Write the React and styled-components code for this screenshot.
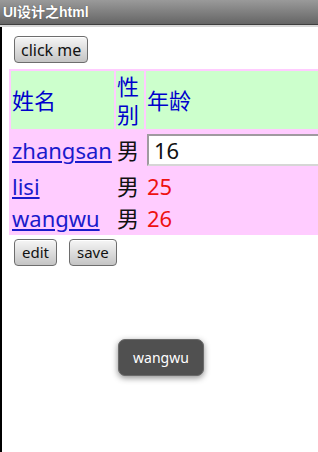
import styled, { createGlobalStyle } from "styled-components"

const Global = createGlobalStyle`
    html, body {
        margin: 0;
        padding: 0;
        background: #fff;
        overflow: hidden;
    }
    body {
        font-family: "Noto Sans", "Noto Sans CJK SC", sans-serif;
    }
`

const Screen = styled.div`
    position: relative;
    width: 318px;
    height: 452px;
    overflow: hidden;
    display: flex;
    flex-direction: column;
`

const TitleBar = styled.div`
    height: 24px;
    flex: none;
    background: linear-gradient(#9a9a9a, #656565);
    border-bottom: 1px solid #3e3e3e;
    color: #fff;
    font-family: "Liberation Sans", "Noto Sans CJK SC", sans-serif;
    font-weight: 700;
    font-size: 14px;
    line-height: 24px;
    padding-left: 3px;
    text-shadow: 0 0 1px #444;
`

const TitleShade = styled.div`
    height: 2px;
    flex: none;
    background: #d6d6d6;
`

const Content = styled.div`
    flex: 1;
    border-left: 2px solid #000;
    padding: 9px 0 0 7px;
`

const Button = styled.button`
    font-family: "Noto Sans", sans-serif;
    font-size: ${(p) => p.$size || 15}px;
    color: #111;
    height: 27px;
    padding: 0 ${(p) => p.$pad || 7}px;
    margin: 0 ${(p) => p.$gap || 0}px 0 5px;
    border: 1px solid #6d6d6d;
    border-radius: 4px;
    background: linear-gradient(#f6f6f6, #d8d8d8 60%, #c4c4c4);
    box-shadow: inset 0 1px 0 #fff;
    line-height: 1;
`

const Table = styled.table`
    margin-top: 6px;
    width: 420px;
    background: #ffccff;
    border-spacing: 2px;
    font-size: 22px;
    line-height: 28px;
`

const Head = styled.td`
    background: #ccffcc;
    color: #0000cc;
    padding: 1px;
    width: ${(p) => p.$w || "auto"};
    vertical-align: middle;
    word-break: break-all;
`

const Cell = styled.td`
    padding: 1px;
    color: ${(p) => p.$color || "#111"};
    vertical-align: middle;
`

const NameLink = styled.a`
    color: #1a1acc;
    text-decoration: underline;
`

const AgeInput = styled.input`
    display: block;
    box-sizing: border-box;
    width: 260px;
    height: 32px;
    margin: 2px 0;
    padding: 0 5px;
    border: 2px solid #a09aa0;
    border-right: none;
    border-bottom-color: #d6d6d6;
    background: #fff;
    font-family: "Noto Sans", sans-serif;
    font-size: 22px;
    color: #111;
`

const Actions = styled.div`
    display: flex;
    margin-top: 4px;
`

const Toast = styled.div`
    position: absolute;
    left: 118px;
    top: 339px;
    width: 86px;
    height: 37px;
    box-sizing: border-box;
    border-radius: 7px;
    background: #505050;
    border: 1px solid #6a6a6a;
    box-shadow: 0 2px 6px rgba(0, 0, 0, 0.45);
    color: #fff;
    font-size: 14px;
    display: flex;
    align-items: center;
    justify-content: center;
`

const people = [
    { name: "zhangsan", sex: "男", age: "16", edit: true },
    { name: "lisi", sex: "男", age: "25" },
    { name: "wangwu", sex: "男", age: "26" },
]

export default function App() {
    return (
        <Screen>
            <Global />
            <TitleBar>UI设计之html</TitleBar>
            <TitleShade />
            <Content>
                <Button $size={16} $pad={6}>click me</Button>
                <Table>
                    <tbody>
                        <tr>
                            <Head $w="101px">姓名</Head>
                            <Head $w="26px">性别</Head>
                            <Head>年龄</Head>
                        </tr>
                        {people.map((p) => (
                            <tr key={p.name}>
                                <Cell><NameLink href="#">{p.name}</NameLink></Cell>
                                <Cell>{p.sex}</Cell>
                                <Cell $color="#ee1111">
                                    {p.edit ? <AgeInput defaultValue={p.age} /> : p.age}
                                </Cell>
                            </tr>
                        ))}
                    </tbody>
                </Table>
                <Actions>
                    <Button $gap={7}>edit</Button>
                    <Button>save</Button>
                </Actions>
            </Content>
            <Toast>wangwu</Toast>
        </Screen>
    )
}
